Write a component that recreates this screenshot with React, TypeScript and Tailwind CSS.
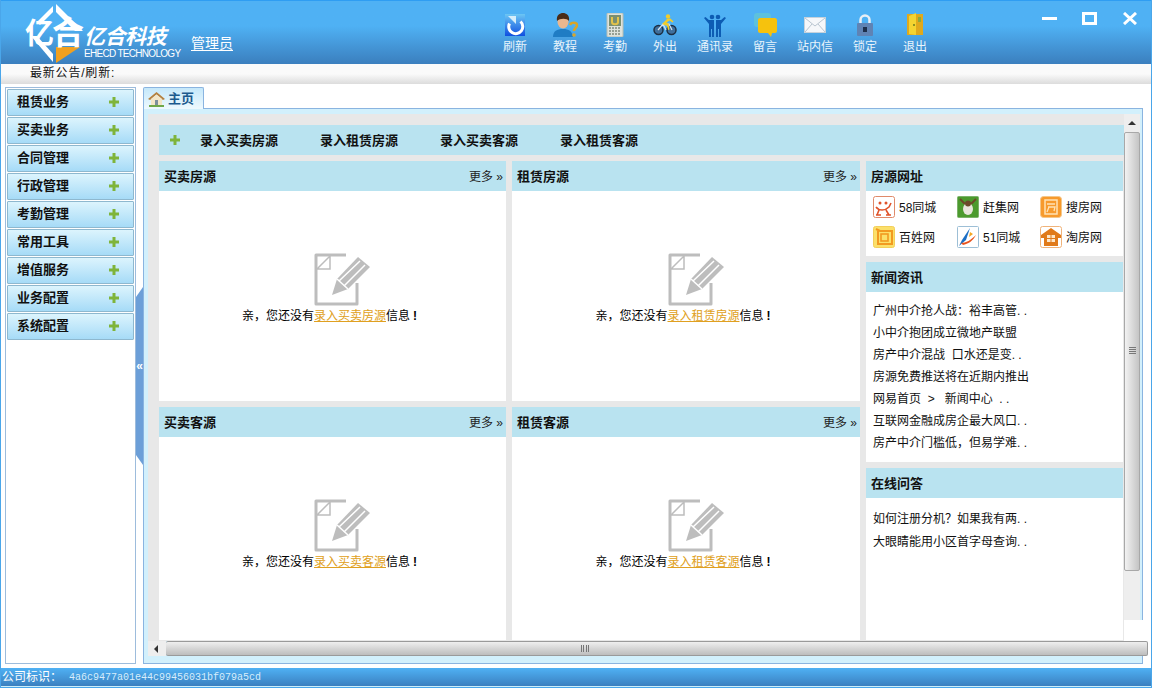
import type { ReactNode } from "react";

const cjk = "font-['Liberation_Sans','Noto_Sans_CJK_SC',sans-serif]";

const Plus = () => (
  <svg width="10" height="10" viewBox="0 0 10 10">
    <path d="M3.5 0h3v3.5H10v3H6.5V10h-3V6.5H0v-3h3.5z" fill="#7fb43a" />
  </svg>
);

const navIcons: Record<string, ReactNode> = {
  refresh: (
    <svg width="24" height="24" viewBox="0 0 24 24">
      <defs>
        <linearGradient id="rf" x1="0" y1="0" x2="0" y2="1">
          <stop offset="0" stopColor="#6cc6f4" />
          <stop offset="1" stopColor="#0f4fe0" />
        </linearGradient>
      </defs>
      <rect x="2" y="1" width="20" height="22" fill="url(#rf)" />
      <path d="M17.500 8.500a7 7 0 1 1-11 2" fill="none" stroke="#fff" strokeWidth="3" />
      <path d="M5 3h8v8z" fill="#d5eefb" />
    </svg>
  ),
  guide: (
    <svg width="28" height="26" viewBox="0 0 28 26">
      <path d="M2 25c0-6 4-8 10-8s9 2 10 8z" fill="#1f7cc4" />
      <ellipse cx="12" cy="10" rx="5.500" ry="6.500" fill="#eab78f" />
      <path d="M6 9c-1-6 3-8 6-8s7 2 6 8c-2-3-9-3-12 0z" fill="#4a2c18" />
      <path d="M19 13c1-3 7-3 7 0 0 3-3 3-3 6" fill="none" stroke="#d9a528" strokeWidth="2.500" />
      <circle cx="23" cy="23" r="1.800" fill="#d9a528" />
    </svg>
  ),
  attend: (
    <svg width="18" height="24" viewBox="0 0 18 24">
      <rect x="1" y="0" width="16" height="24" rx="1" fill="#dfe3dc" stroke="#b6bdb2" />
      <rect x="3" y="2" width="12" height="11" fill="#7a8f70" />
      <path d="M6 4v5c0 3 6 3 6 0V4" fill="none" stroke="#e4c34a" strokeWidth="2" />
      <path d="M3 15h12M3 18h12M3 21h12" stroke="#808a7c" strokeWidth="1.500" strokeDasharray="2 1" />
    </svg>
  ),
  out: (
    <svg width="24" height="22" viewBox="0 0 24 22">
      <circle cx="5.500" cy="16" r="4.500" fill="#3f6f9c" stroke="#1d2f44" strokeWidth="1.500" />
      <circle cx="18.500" cy="16" r="4.500" fill="#3f6f9c" stroke="#1d2f44" strokeWidth="1.500" />
      <path d="M5 16l5-6h6l3 6M10 10l3 6" fill="none" stroke="#d8e4ee" strokeWidth="1.200" />
      <circle cx="15" cy="2.500" r="2.200" fill="#f0cc2c" />
      <path d="M14 5l-5 5 5 2 1 4 1.500-.5-1-6-2-1 3-2 3 2 1-1-3-3z" fill="#f0cc2c" />
    </svg>
  ),
  contacts: (
    <svg width="24" height="24" viewBox="0 0 24 24" fill="#0d5cb3">
      <circle cx="9" cy="4" r="2.300" />
      <circle cx="15" cy="4" r="2.300" />
      <path d="M6 7h5v17H9v-8H8v8H6zM13 7h5v17h-2v-8h-1v8h-2z" />
      <path d="M6 11L1 5l1.500-1L7 8zM18 11l5-6-1.500-1L17 8z" />
    </svg>
  ),
  message: (
    <svg width="24" height="24" viewBox="0 0 24 24">
      <rect x="1" y="0" width="17" height="14" rx="3" fill="#5dc1dd" />
      <path d="M7 5h15c1 0 2 1 2 2v11c0 1-1 2-2 2h-3l-1 4-3-4H7c-1 0-2-1-2-2V7c0-1 1-2 2-2z" fill="#f6c20d" />
    </svg>
  ),
  mail: (
    <svg width="22" height="16" viewBox="0 0 22 16">
      <rect x="0.500" y="0.500" width="21" height="15" fill="#f5f7fa" stroke="#c6d2dc" />
      <path d="M1 1l10 8 10-8M1 15l7-8M21 15l-7-8" fill="none" stroke="#b9c5d0" />
    </svg>
  ),
  lock: (
    <svg width="16" height="22" viewBox="0 0 16 22">
      <path d="M3.500 10V6a4.500 4.500 0 0 1 9 0v4" fill="none" stroke="#e8eef5" strokeWidth="2.500" />
      <rect x="0" y="9" width="16" height="13" rx="1" fill="#5f83b4" />
      <rect x="6" y="13" width="4" height="5" fill="#1d2f4c" />
    </svg>
  ),
  exit: (
    <svg width="16" height="24" viewBox="0 0 16 24">
      <rect x="0" y="1" width="16" height="21" fill="#e0a91c" />
      <path d="M2 3l7-3v22l-7-1z" fill="#f4d431" />
      <rect x="11" y="4" width="3" height="5" fill="#8ea93c" />
      <circle cx="7" cy="12" r="1" fill="#6a7b22" />
    </svg>
  ),
};

const navItems = [
  ["refresh", "刷新"],
  ["guide", "教程"],
  ["attend", "考勤"],
  ["out", "外出"],
  ["contacts", "通讯录"],
  ["message", "留言"],
  ["mail", "站内信"],
  ["lock", "锁定"],
  ["exit", "退出"],
];

const Logo = () => (
  <svg width="60" height="60" viewBox="0 0 60 60">
    <path d="M31 1L58 28H50L31 9z" fill="#fff" />
    <path d="M28 3L12 19l3 3L28 9z" fill="#fff" />
    <path d="M6 33l22 26v-8L12 33z" fill="#fff" />
    <path d="M31 44h24L31 60z" fill="#f0a020" />
    <text x="0" y="41" fontSize="29" fontWeight="700" fill="#fff" fontFamily="'Noto Sans CJK SC',sans-serif">亿</text>
    <text x="27" y="41" fontSize="32" fontWeight="700" fill="#fff" fontFamily="'Noto Sans CJK SC',sans-serif">合</text>
  </svg>
);

const Header = () => (
  <div className="flex h-[64px] items-start border-t border-[#2f9df2] bg-gradient-to-b from-[#4fb1f4] from-40% to-[#3b7fbe] text-white">
    <div className="ml-[24px] mt-[2px] shrink-0">
      <Logo />
    </div>
    <div className="-ml-[1px] mt-[24px] w-[97px] shrink-0">
      <div className="text-[21px] font-bold italic leading-[24px] tracking-[-0.5px]">亿合科技</div>
      <div className="whitespace-nowrap text-[10px] leading-[9px] tracking-[-0.7px]">EHECD TECHNOLOGY</div>
    </div>
    <a className="ml-[10px] mt-[33px] text-[14px] leading-[18px] underline decoration-white underline-offset-2">管理员</a>
    <div className="ml-[257px] flex">
      {navItems.map(([icon, label]) => (
        <div key={label} className="flex h-[63px] w-[50px] flex-col items-center">
          <div className="mt-[10px] flex h-[28px] items-center">{navIcons[icon]}</div>
          <div className="text-[12px] leading-[16px] text-[#e8f4fc]">{label}</div>
        </div>
      ))}
    </div>
    <div className="ml-[102px] flex items-start">
      <div className="mt-[16px] h-[3px] w-[15px] bg-white" />
      <div className="ml-[25px] mt-[11px] h-[13px] w-[15px] border-[3px] border-white" />
      <svg className="ml-[26px] mt-[11px]" width="14" height="13" viewBox="0 0 14 13">
        <path d="M1 1l12 11M13 1L1 12" stroke="#fff" strokeWidth="3" />
      </svg>
    </div>
  </div>
);

const menu = ["租赁业务", "买卖业务", "合同管理", "行政管理", "考勤管理", "常用工具", "增值服务", "业务配置", "系统配置"];

const Sidebar = () => (
  <div className="ml-[4px] flex h-[577px] w-[131px] shrink-0 flex-col gap-px border border-[#9dbcdc] bg-white px-px pt-px">
    {menu.map((m) => (
      <div
        key={m}
        className="flex h-[27px] items-center justify-between rounded-[1px] border border-[#8eb8cf] bg-gradient-to-b from-[#dcf4fd] to-[#a6dbf7] pb-[2px] pl-[9px] pr-[14px]"
      >
        <span className="text-[13px] font-bold text-[#111]">{m}</span>
        <Plus />
      </div>
    ))}
  </div>
);

const EmptyNote = ({ link }: { link: string }) => (
  <div className="flex flex-1 flex-col items-center pt-[62px]">
    <svg width="58" height="54" viewBox="0 0 58 54" className="ml-[21px]">
      <path d="M32 2H2V51H43V30" fill="none" stroke="#bdbdbd" strokeWidth="3" strokeLinejoin="round" />
      <path d="M3 16H16V3z" fill="none" stroke="#bdbdbd" strokeWidth="1.500" />
      <path d="M18 42l5-16L44 4l12 10-22 22z" fill="#bdbdbd" />
      <path d="M25 28L46 8M30 33L51 12" stroke="#fff" strokeWidth="1.500" />
      <path d="M23 26l11 10" stroke="#fff" strokeWidth="1.500" />
    </svg>
    <div className="mr-[6px] mt-[1px] text-[12px] leading-[17px] text-black">
      {"亲\uFF0C您还没有"}
      <a className="text-[#e0a020] underline">{link}</a>信息<span className="pl-[3px] font-bold">!</span>
    </div>
  </div>
);

const Head = ({ title, more }: { title: string; more?: boolean }) => (
  <div className="flex h-[30px] shrink-0 items-center justify-between bg-[#b9e3f0] pl-[5px] pr-[3px] pt-px">
    <span className="text-[13px] font-bold text-[#111]">{title}</span>
    {more && <span className="text-[12px] text-[#222]">更多 »</span>}
  </div>
);

const Card = ({ title, link }: { title: string; link: string }) => (
  <div className="flex flex-col bg-white">
    <Head title={title} more />
    <EmptyNote link={link} />
  </div>
);

const siteIcons: ReactNode[] = [
  <svg width="22" height="22" viewBox="0 0 22 22" key="58">
    <rect x="0.500" y="0.500" width="21" height="21" rx="2" fill="#fff" stroke="#e08a6a" />
    <circle cx="7" cy="7" r="1.500" fill="#e0532a" />
    <circle cx="13" cy="7" r="1.500" fill="#e0532a" />
    <path d="M3 11c3 4 9 4 13 0l2-4M6 14l-2 5M13 14l3 5M3 19h5M13 19h5" fill="none" stroke="#e0532a" strokeWidth="1.600" />
  </svg>,
  <svg width="22" height="22" viewBox="0 0 22 22" key="gj">
    <rect x="0.500" y="0.500" width="21" height="21" rx="1" fill="#4c9a2e" stroke="#7cb36a" />
    <path d="M3 3l5 5M19 3l-5 5" stroke="#6b4a2a" strokeWidth="2" />
    <ellipse cx="11" cy="13" rx="5" ry="6" fill="#e8e6dc" />
    <circle cx="11" cy="7.500" r="3" fill="#6b4a2a" />
  </svg>,
  <svg width="22" height="22" viewBox="0 0 22 22" key="sf">
    <rect x="0.500" y="0.500" width="21" height="21" rx="3" fill="#f79a2c" stroke="#f5c78a" />
    <rect x="5" y="4" width="12" height="14" fill="none" stroke="#ffe2b4" strokeWidth="1.500" />
    <path d="M7 8h8M8 11h7l-1 4M9 11l-2 5" fill="none" stroke="#ffe2b4" strokeWidth="1.300" />
  </svg>,
  <svg width="22" height="22" viewBox="0 0 22 22" key="bx">
    <rect x="0.500" y="0.500" width="21" height="21" rx="2" fill="#fbe06a" stroke="#f3cf5a" />
    <path d="M3 3l4 2h12v13H5V5" fill="none" stroke="#f29a20" strokeWidth="2" />
    <rect x="8" y="8" width="7" height="7" fill="none" stroke="#f29a20" strokeWidth="1.600" />
  </svg>,
  <svg width="22" height="22" viewBox="0 0 22 22" key="51">
    <rect x="0.500" y="0.500" width="21" height="21" rx="1" fill="#fff" stroke="#9dbfd6" />
    <path d="M13 2L5 14l-3 6 7-6z" fill="#1c6fc4" />
    <path d="M4 17c5 0 10-3 15-8-3 6-8 9-13 10z" fill="#e8541e" />
    <path d="M13 6l3 2-4 3z" fill="#f5a623" />
  </svg>,
  <svg width="22" height="22" viewBox="0 0 22 22" key="tf">
    <rect x="0.500" y="0.500" width="21" height="21" rx="2" fill="#fff" stroke="#f0b37a" />
    <path d="M1 9l10-7 10 7v3h-3v8H4v-8H1z" fill="#e07a1a" />
    <rect x="7" y="9" width="8" height="7" fill="#fde6c8" />
    <path d="M11 9v7M7 12.500h8" stroke="#e07a1a" />
  </svg>,
];

const sites = ["58同城", "赶集网", "搜房网", "百姓网", "51同城", "淘房网"];

const news = [
  "广州中介抢人战\uFF1A裕丰高管. .",
  "小中介抱团成立微地产联盟",
  "房产中介混战  口水还是变. .",
  "房源免费推送将在近期内推出",
  "网易首页  >   新闻中心  . .",
  "互联网金融成房企最大风口. .",
  "房产中介门槛低\uFF0C但易学难. .",
];

const RightCol = () => (
  <div className="row-span-2 flex flex-col gap-[6px]">
    <div className="h-[95px] bg-white">
      <Head title="房源网址" />
      <div className="grid grid-cols-[84px_83px_1fr] gap-y-[8px] pl-[7px] pt-[5px]">
        {sites.map((s, i) => (
          <div key={s} className="flex h-[22px] items-center gap-[4px] text-[12px] text-[#111]">
            {siteIcons[i]}
            <span className="pt-[2px]">{s}</span>
          </div>
        ))}
      </div>
    </div>
    <div className="h-[200px] bg-white">
      <Head title="新闻资讯" />
      <div className="pl-[7px] pt-[8px] text-[12px] leading-[22px] text-[#111]">
        {news.map((n) => (
          <div key={n} className="whitespace-pre">{n}</div>
        ))}
      </div>
    </div>
    <div className="flex-1 bg-white">
      <Head title="在线问答" />
      <div className="pl-[7px] pt-[10px] text-[12px] leading-[23px] text-[#111]">
        <div>{"如何注册分机\uFF1F如果我有两. ."}</div>
        <div>大眼睛能用小区首字母查询. .</div>
      </div>
    </div>
  </div>
);

const VScroll = () => (
  <div className="relative z-10 -mr-px flex w-[19px] shrink-0 flex-col bg-white">
    <div className="h-[506px] border-r border-[#8ab4e0] bg-[#d2f0fc] pr-[2px]">
      <div className="flex h-full flex-col bg-[#eeeeee]">
        <div className="flex h-[18px] items-center justify-center">
          <div className="h-0 w-0 border-x-[4px] border-b-[4px] border-x-transparent border-b-[#333]" />
        </div>
        <div className="flex h-[439px] flex-col items-center justify-center rounded-[2px] border border-[#a8a8a8] bg-gradient-to-r from-[#f2f2f2] to-[#c4c4c4] pb-[2px]">
          <div className="h-[7px] w-[7px] border-y-[3px] border-double border-[#777]" />
        </div>
      </div>
    </div>
  </div>
);

const HScroll = () => (
  <div className="relative z-10 flex h-[15px] w-[1000px] shrink-0">
    <div className="flex w-[18px] shrink-0 items-center justify-center bg-[#eeeeee] pr-[3px]">
      <div className="h-0 w-0 border-y-[4px] border-r-[4px] border-y-transparent border-r-[#333]" />
    </div>
    <div className="flex flex-1 items-center rounded-[2px] border-y border-r border-[#9a9a9a] bg-gradient-to-b from-[#efefef] to-[#bdbdbd] pl-[415px]">
      <div className="h-[7px] w-[8px] border-x-[3px] border-double border-[#777]" />
    </div>
  </div>
);

const Content = () => (
  <div className="flex h-[527px]">
    <div className="flex w-[976px] flex-col bg-[#e8e8e8] pl-[11px] pt-[11px]">
      <div className="flex h-[30px] shrink-0 items-center bg-[#b9e3f0] pl-[11px] pt-[2px] text-[13px] font-bold text-[#111]">
        <span className="-mt-[2px]">
          <Plus />
        </span>
        <span className="ml-[20px] w-[120px]">录入买卖房源</span>
        <span className="w-[120px]">录入租赁房源</span>
        <span className="w-[120px]">录入买卖客源</span>
        <span>录入租赁客源</span>
      </div>
      <div className="mt-[6px] grid h-[479px] grid-cols-[347px_348px_257px] grid-rows-[240px_233px] gap-[6px]">
        <Card title="买卖房源" link="录入买卖房源" />
        <Card title="租赁房源" link="录入租赁房源" />
        <RightCol />
        <Card title="买卖客源" link="录入买卖客源" />
        <Card title="租赁客源" link="录入租赁客源" />
      </div>
    </div>
    <VScroll />
  </div>
);

export default function App() {
  return (
    <div className={`flex h-[688px] w-[1152px] flex-col overflow-hidden border-x border-b border-[#4aa6ea] bg-white ${cjk}`}>
      <Header />
      <div className="h-[20px] bg-gradient-to-b from-[#fafafa] from-50% to-[#dcdcdc] pl-[29px] pt-px text-[12px] leading-[16px] tracking-[0.8px] text-[#111]">
        最新公告/刷新:
      </div>
      <div className="mt-[3px] flex h-[577px]">
        <Sidebar />
        <div className="flex w-[7px] shrink-0 items-start pt-[200px]">
          <div className="flex h-[178px] w-[7px] items-center justify-center bg-[#6c9fd8] pb-[20px] text-[12px] font-bold leading-none text-white [clip-path:polygon(0_10px,100%_0,100%_100%,0_calc(100%-10px))]">
            «
          </div>
        </div>
        <div className="flex w-[1000px] shrink-0 flex-col">
          <div className="relative z-10 -mb-px flex h-[22px] w-[61px] items-center gap-[3px] rounded-t-[2px] border-x border-t border-[#8ab4e0] bg-gradient-to-b from-[#c5e8fa] to-[#eef9fe] pl-[4px]">
            <svg width="17" height="16" viewBox="0 0 17 16">
              <path d="M0 8l8.500-7 8.500 7-2 1-6.500-5.500L2 9z" fill="#b5803f" />
              <path d="M3 8l5.500-4.500L14 8v6H3z" fill="#f3e6c8" />
              <rect x="7" y="9" width="3" height="5" fill="#7c8f9c" />
              <path d="M1 14h15v2H1z" fill="#6fa84a" />
            </svg>
            <span className="text-[13px] font-bold text-[#1c5a8e]">主页</span>
          </div>
          <div className="flex h-[556px] flex-col border border-[#8ab4e0] bg-[#d2f0fc] pl-[4px] pt-[5px]">
            <Content />
            <HScroll />
          </div>
        </div>
      </div>
      <div className="h-[4px] bg-white" />
      <div className="flex h-[18px] items-center bg-gradient-to-b from-[#4fb1f4] to-[#3b80c0] pl-[1px] text-[12px] text-white">
        <span className="w-[67px]">{"公司标识\uFF1A"}</span>
        <span className="font-['Liberation_Mono',monospace] text-[10px] text-[#d6eefc]">4a6c9477a01e44c99456031bf079a5cd</span>
      </div>
      <div className="h-px bg-[#cdeefa]" />
    </div>
  );
}
